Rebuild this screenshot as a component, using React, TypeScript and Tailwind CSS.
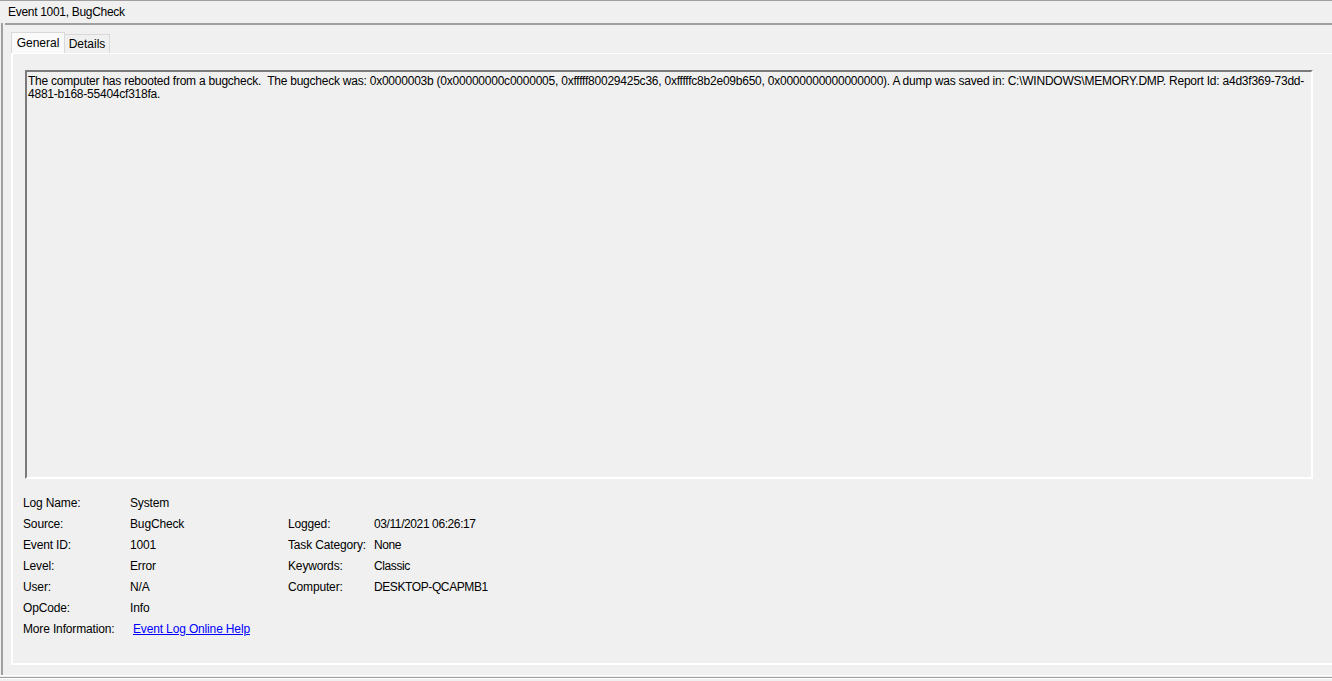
import React from "react";

const rows: [string, React.ReactNode, string?, string?][] = [
  ["Log Name:", "System"],
  ["Source:", "BugCheck", "Logged:", "03/11/2021 06:26:17"],
  ["Event ID:", "1001", "Task Category:", "None"],
  ["Level:", "Error", "Keywords:", "Classic"],
  ["User:", "N/A", "Computer:", "DESKTOP-QCAPMB1"],
  ["OpCode:", "Info"],
];

export default function App() {
  return (
    <div
      className="w-[1332px] h-[681px] bg-[#f0f0f0] overflow-hidden flex flex-col text-[12px] text-black"
      style={{ fontFamily: '"Liberation Sans", Arial, sans-serif' }}
    >
      <div className="h-px bg-[#a0a0a0]" />
      <div className="h-[22px] pl-[8px] flex items-center tracking-[-0.3px]">Event 1001, BugCheck</div>
      <div className="ml-px h-[652px] border-l-2 border-[#a0a0a0] flex flex-col">
        <div className="ml-[2px] h-[2px] bg-[#a0a0a0]" />
        <div className="flex items-end ml-[8px] mt-[7px] h-[21px]">
          <div className="h-[21px] w-[54px] bg-[#fafafa] border border-b-0 border-[#d9d9d9] flex items-center justify-center">
            General
          </div>
          <div className="h-[19px] w-[45px] bg-[#f0f0f0] border border-l-0 border-b-0 border-[#d9d9d9] flex items-center justify-center">
            Details
          </div>
        </div>
        <div className="ml-[8px] h-[612px] border-l-2 border-t border-b-2 border-white flex flex-col">
          <div className="mt-[16px] ml-[12px] w-[1288px] h-[409px] border-t-2 border-l-2 border-t-[#7a7a7a] border-l-[#7a7a7a] border-r-2 border-b-2 border-r-[#ffffff] border-b-[#ffffff] bg-[#f0f0f0]">
            <div className="pl-[1px] pt-[3px] leading-[13px] whitespace-pre tracking-[-0.23px]">
              <div>
                The computer has rebooted from a bugcheck.  The bugcheck was: 0x0000003b (0x00000000c0000005, 0xfffff80029425c36, 0xfffffc8b2e09b650, 0x0000000000000000). A dump was saved in: C:\WINDOWS\MEMORY.DMP. Report Id: a4d3f369-73dd-
              </div>
              <div>4881-b168-55404cf318fa.</div>
            </div>
          </div>
          <div className="mt-[13px] ml-[10px] grid grid-cols-[107px_158px_86px_1fr] auto-rows-[21px] items-center tracking-[-0.15px]">
            {rows.map(([a, b, c, d], i) => (
              <React.Fragment key={i}>
                <div>{a}</div>
                <div>{b}</div>
                <div>{c ?? ""}</div>
                <div className="tracking-[-0.4px]">{d ?? ""}</div>
              </React.Fragment>
            ))}
            <div>More Information:</div>
            <div className="col-span-3 pl-[3px]">
              <span className="text-[#0000ff] underline">Event Log Online Help</span>
            </div>
          </div>
        </div>
      </div>
      <div className="h-px bg-white mt-[0px]" />
      <div className="h-px bg-[#a0a0a0] mt-px" />
      <div className="h-px bg-white" />
    </div>
  );
}
